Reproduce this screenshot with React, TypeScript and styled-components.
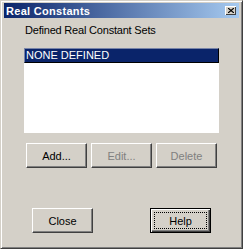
import styled, { createGlobalStyle } from "styled-components";

const GlobalStyle = createGlobalStyle`
  html, body {
    margin: 0;
    padding: 0;
    background: #d4d0c8;
  }
  * {
    box-sizing: border-box;
  }
`;

export default function App() {
  return (
    <>
      <GlobalStyle />
      <Dialog>
        <TitleBar>
          <Title>Real Constants</Title>
          <CloseBox aria-label="Close">
            <svg width="6" height="5" viewBox="0 0 6 5">
              <path d="M0 0 L6 5 M6 0 L0 5" stroke="#000" strokeWidth="1.2" />
            </svg>
          </CloseBox>
        </TitleBar>
        <Body>
          <Label>Defined Real Constant Sets</Label>
          <ListBox>
            <ListItem selected>NONE DEFINED</ListItem>
          </ListBox>
          <ButtonRow>
            <Button>Add...</Button>
            <Button disabled>Edit...</Button>
            <Button disabled>Delete</Button>
          </ButtonRow>
          <FooterRow>
            <Button>Close</Button>
            <Button $default>
              <Focus>Help</Focus>
            </Button>
          </FooterRow>
        </Body>
      </Dialog>
    </>
  );
}

const Dialog = styled.div`
  width: 243px;
  height: 249px;
  display: flex;
  flex-direction: column;
  padding: 2px 3px 3px 3px;
  background: #d4d0c8;
  border: 1px solid;
  border-color: #d4d0c8 #404040 #404040 #d4d0c8;
  box-shadow: inset 1px 1px #ffffff, inset -1px -1px #808080;
  font-family: "Liberation Sans", Arial, sans-serif;
  font-size: 11px;
  color: #000;
`;

const TitleBar = styled.div`
  height: 15px;
  display: flex;
  align-items: center;
  justify-content: space-between;
  padding: 0 2px 0 2px;
  background: linear-gradient(to right, #0a246a, #a6caf0);
`;

const Title = styled.span`
  color: #fff;
  font-weight: bold;
  font-size: 11px;
  letter-spacing: 0.3px;
`;

const CloseBox = styled.div`
  width: 11px;
  height: 9px;
  display: flex;
  align-items: center;
  justify-content: center;
  background: #d4d0c8;
  box-shadow: inset 1px 1px #ffffff, inset -1px -1px #404040;
  margin-right: 1px;
`;

const Body = styled.div`
  flex: 1;
  display: flex;
  flex-direction: column;
`;

const Label = styled.div`
  margin: 6px 0 0 21px;
  line-height: 13px;
  letter-spacing: -0.2px;
`;

const ListBox = styled.div`
  margin: 11px 0 0 20px;
  width: 195px;
  height: 85px;
  background: #fff;
`;

const ListItem = styled.div<{ selected?: boolean }>`
  height: 15px;
  line-height: 13px;
  padding-left: 1px;
  color: ${(p) => (p.selected ? "#fff" : "#000")};
  background: ${(p) => (p.selected ? "#0a246a" : "transparent")};
  border: 1px solid;
  border-color: ${(p) =>
    p.selected ? "#7884a8 #000 #000 #7884a8" : "transparent"};
  font-size: 11px;
`;

const ButtonRow = styled.div`
  display: flex;
  gap: 4px;
  margin: 10px 0 0 22px;
`;

const FooterRow = styled.div`
  display: flex;
  gap: 57px;
  margin: 40px 0 0 28px;
`;

const Button = styled.button<{ $default?: boolean }>`
  width: 61px;
  height: 25px;
  padding: 0;
  margin: 0;
  display: flex;
  align-items: center;
  justify-content: center;
  font-family: "Liberation Sans", Arial, sans-serif;
  font-size: 11px;
  color: #000;
  background: #d4d0c8;
  border: 1px solid;
  border-color: ${(p) =>
    p.$default ? "#000" : "#ffffff #404040 #404040 #ffffff"};
  box-shadow: ${(p) =>
    p.$default
      ? "inset 1px 1px #ffffff, inset -1px -1px #404040, inset -2px -2px #808080"
      : "inset -1px -1px #808080"};

  &:disabled {
    color: #808080;
  }
`;

const Focus = styled.span`
  width: 53px;
  height: 17px;
  display: flex;
  align-items: center;
  justify-content: center;
  border: 1px dotted #000;
`;
